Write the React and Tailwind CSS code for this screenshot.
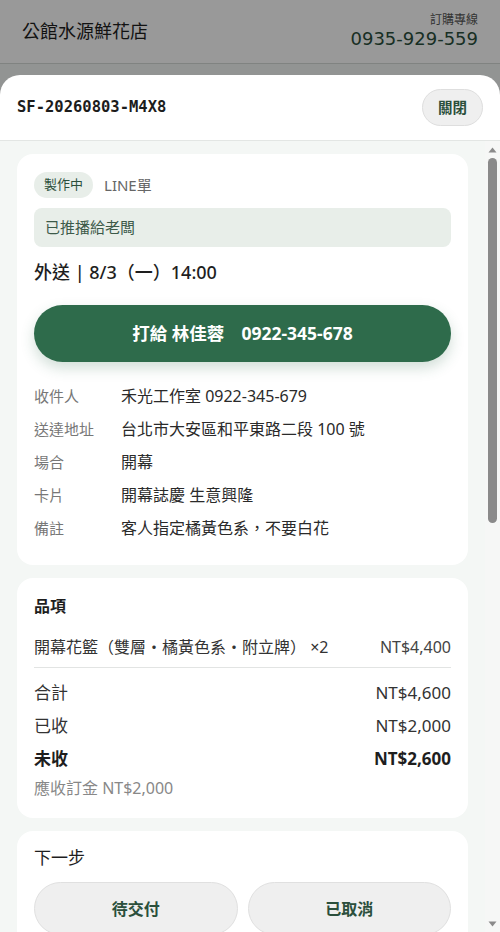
const font = { fontFamily: '"Noto Sans", "Noto Sans CJK TC", sans-serif' }

const details = [
  { label: "收件人", value: "禾光工作室 0922-345-679" },
  { label: "送達地址", value: "台北市大安區和平東路二段 100 號" },
  { label: "場合", value: "開幕" },
  { label: "卡片", value: "開幕誌慶 生意興隆" },
  { label: "備註", value: "客人指定橘黃色系，不要白花" },
]

const totals = [
  { label: "合計", value: "NT$4,600" },
  { label: "已收", value: "NT$2,000" },
  { label: "未收", value: "NT$2,600", strong: true },
]

const Scrollbar = () => (
  <div className="absolute inset-y-0 right-0 flex w-[15px] flex-col items-center bg-[#f6f7f6]">
    <svg width="9" height="6" viewBox="0 0 9 6" className="mt-[6px]">
      <path d="M4.5 0.5 L8.5 5.5 L0.5 5.5 Z" fill="#8a8a8a" />
    </svg>
    <div className="mt-[5px] h-[365px] w-[9px] rounded-full bg-[#8a8a8a]" />
    <div className="flex-1" />
    <svg width="9" height="6" viewBox="0 0 9 6" className="mb-[5px]">
      <path d="M0.5 0.5 L8.5 0.5 L4.5 5.5 Z" fill="#8a8a8a" />
    </svg>
  </div>
)

const Sheet = () => (
  <div className="absolute inset-x-0 bottom-0 top-[75px] flex flex-col rounded-t-[20px] bg-white">
    <div className="flex h-[66px] shrink-0 items-center justify-between border-b border-[#e3e6e4] px-[17px]">
      <div className="text-[15.5px] font-bold text-[#1c1c1c]" style={{ fontFamily: '"DejaVu Sans Mono", monospace' }}>
        SF-20260803-M4X8
      </div>
      <button className="h-[37px] w-[61px] rounded-full border border-[#dedede] bg-[#efefef] text-[14.5px] font-bold text-[#2b4f3c]">
        關閉
      </button>
    </div>
    <div className="relative min-h-0 flex-1">
      <div className="h-full overflow-y-auto bg-[#f4f7f5] pl-[17px] pr-[32px] pt-[13px] pb-6">
        <div className="flex flex-col gap-[13px]">
          <div className="rounded-2xl bg-white px-[17px] pt-[18px] pb-[25px]">
            <div className="flex items-center gap-[11px]">
              <span className="flex h-[26px] items-center rounded-full bg-[#e8eee9] px-[10px] text-[13px] text-[#2b4f3c]">製作中</span>
              <span className="text-[15px] text-[#666]">LINE單</span>
            </div>
            <div className="mt-[10px] flex h-[39px] items-center rounded-lg bg-[#e8eee9] px-[11px] text-[15px] text-[#3d5a49]">
              已推播給老闆
            </div>
            <div className="mt-[12px] text-[18px] leading-[26px] font-medium text-[#1e1e1e]">外送 | 8/3（一）14:00</div>
            <button className="mt-[20px] flex h-[57px] w-full items-center justify-center rounded-full bg-[#2e6b4b] text-[17.5px] font-bold text-white shadow-[0_6px_14px_rgba(46,107,75,0.22)]">
              打給 林佳蓉<span className="ml-[17px]">0922-345-678</span>
            </button>
            <div className="mt-[22px] flex flex-col gap-[9px]">
              {details.map((d) => (
                <div key={d.label} className="flex items-center leading-[24px]">
                  <span className="w-[87px] shrink-0 text-[15px] text-[#777]">{d.label}</span>
                  <span className="text-[16px] text-[#2a2a2a]">{d.value}</span>
                </div>
              ))}
            </div>
          </div>

          <div className="rounded-2xl bg-white px-[17px] pt-[16px] pb-[18px]">
            <div className="text-[16px] leading-[24px] font-bold text-[#1e1e1e]">品項</div>
            <div className="mt-[17px] flex items-center justify-between border-b border-[#e2e4e3] pb-[8px] text-[16px] leading-[24px] text-[#333]">
              <span>開幕花籃（雙層・橘黃色系・附立牌） ×2</span>
              <span className="text-[#444]">NT$4,400</span>
            </div>
            <div className="mt-[12px] flex flex-col gap-[7px] text-[17px] leading-[26px]">
              {totals.map((t) => (
                <div key={t.label} className={`flex justify-between ${t.strong ? "font-bold text-[#1e1e1e]" : "text-[#333]"}`}>
                  <span>{t.label}</span>
                  <span>{t.value}</span>
                </div>
              ))}
            </div>
            <div className="mt-[4px] text-[16px] leading-[24px] text-[#888]">應收訂金 NT$2,000</div>
          </div>

          <div className="rounded-2xl bg-white px-[17px] pt-[14px] pb-[17px]">
            <div className="text-[17px] leading-[26px] text-[#1e1e1e]">下一步</div>
            <div className="mt-[11px] grid grid-cols-2 gap-[10px]">
              <button className="h-[53px] rounded-full border border-[#e0e0e0] bg-[#efefef] text-[16px] font-bold text-[#2b4f3c]">待交付</button>
              <button className="h-[53px] rounded-full border border-[#e0e0e0] bg-[#efefef] text-[16px] font-bold text-[#2b4f3c]">已取消</button>
            </div>
          </div>
        </div>
      </div>
      <Scrollbar />
    </div>
  </div>
)

const App = () => {
  return (
    <div className="relative h-[932px] w-full overflow-hidden bg-[#f4f7f5]" style={font}>
      <header className="flex h-[64px] items-center justify-between border-b border-[#d6dad7] bg-white px-[22px]">
        <div className="text-[18px] text-[#1e1e1e]">公館水源鮮花店</div>
        <div className="flex flex-col items-end">
          <span className="text-[12px] leading-[15px] text-[#555]">訂購專線</span>
          <span className="text-[18px] leading-[24px] text-[#2b4f3c]" style={{ fontFamily: '"DejaVu Sans", sans-serif' }}>
            0935-929-559
          </span>
        </div>
      </header>
      <div className="absolute inset-0 bg-black/40" />
      <Sheet />
    </div>
  )
}

export default App
